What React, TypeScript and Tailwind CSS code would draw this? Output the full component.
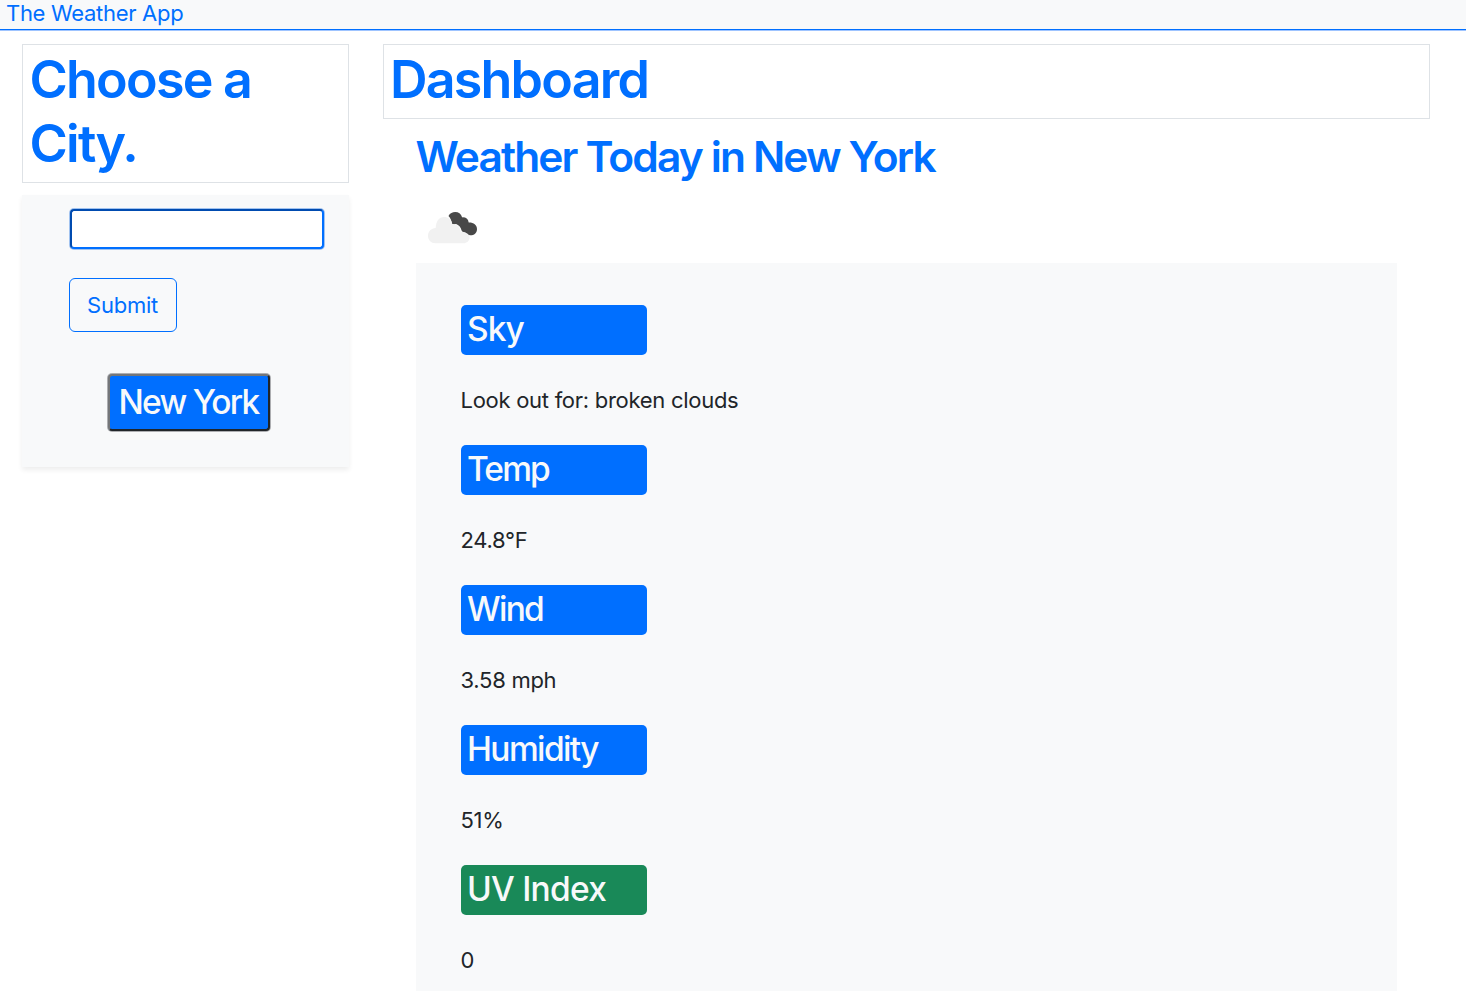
const readings = [
  { label: "Sky", value: "Look out for: broken clouds", tone: "bg-[#006fff]", labelSpacing: "tracking-[-1px]" },
  { label: "Temp", value: "24.8°F", tone: "bg-[#006fff]", labelSpacing: "tracking-[-1.9px]" },
  { label: "Wind", value: "3.58 mph", tone: "bg-[#006fff]", labelSpacing: "tracking-[-1.7px]" },
  { label: "Humidity", value: "51%", tone: "bg-[#006fff]", labelSpacing: "tracking-[-1.6px]" },
  { label: "UV Index", value: "0", tone: "bg-[#198958]", labelSpacing: "tracking-[-0.75px]" },
];

function BrokenClouds() {
  return (
    <svg className="ml-[11px] mt-[11px] block h-[33px] w-[51px]" viewBox="0 0 51 33" aria-hidden="true">
      <path
        d="M21.500 5C23 2 25.600 1 28.200 1c3.300 0 5.800 1.700 7 5.400 3.400-.3 5.900 1.500 6.500 5 4.700-.2 8.300 2.400 8.300 6.500 0 3.900-2.900 6.400-6.600 6.400-2.300 0-4-.8-5.200-2.500-2-.1-3.200-1-3.700-2.500-.8-3.300-2.700-5.300-5.500-6.300l-3.700.7C24.600 9.500 23.300 7 21.500 5Z"
        fill="#484848"
      />
      <path
        d="M8.500 32.300C3.900 32.300 1 29 1 24.800c0-4.500 3.200-7.700 7.700-7.900C9 10.400 12 6 17 6c4.300 0 7.200 2.600 8.300 7 4.700-.3 8 2.500 8.300 7.500 4.500.2 9 2.500 9 6 0 3.300-2.800 5.800-6.300 5.800Z"
        fill="#f1f1f1"
      />
    </svg>
  );
}

export default function App() {
  return (
    <div className="min-h-[996px] bg-white font-['Inter','Liberation_Sans',sans-serif] text-[#212529]">
      <header className="flex h-[30px] items-center border-b border-[#006fff] bg-[#f8f9fa] pb-[3px] pl-[6px] shadow-[0_1px_0_#9fc4ff]">
        <span className="text-[22px] leading-[26px] tracking-[-0.3px] text-[#006fff]">The Weather App</span>
      </header>

      <div className="flex items-start">
        <aside className="w-[382px] pl-[21px] pt-[14px]">
          <h1 className="ml-px h-[139px] w-[327px] border border-[#dee2e6] pl-[6.500px] pt-[3px] text-[52px] font-semibold leading-[64px] tracking-[-1.77px] text-[#006fff]">
            Choose a City.
          </h1>
          <section className="ml-px mt-[12px] h-[272px] w-[327px] bg-[#f8f9fa] pl-[47px] pt-[14px] shadow-[0_3px_5px_rgba(0,0,0,0.07)]">
            <input
              aria-label="City"
              className="ml-px block h-[40px] w-[254px] rounded-[4px] border-2 border-b-[#006fff] border-l-[#004bb0] border-r-[#006fff] border-t-[#004bb0] bg-white px-2 text-[22px] shadow-[0_0_0_1px_rgba(0,95,220,0.35)] outline-none"
            />
            <button className="mt-[29px] block h-[54px] w-[108px] rounded-[6px] border border-[#006fff] pr-px text-[22px] tracking-[-0.25px] text-[#006fff]">
              Submit
            </button>
            <button className="ml-[39px] mt-[42px] block h-[57px] w-[162px] whitespace-nowrap rounded-[4px] border-2 border-b-[#212529] border-l-[#747679] border-r-[#212529] border-t-[#747679] bg-[#006fff] pr-px pb-px text-[33.500px] font-medium leading-[50px] tracking-[-1.75px] text-[#f8f9fa] shadow-[0_0_0_1px_rgba(60,63,67,0.4)]">
              New York
            </button>
          </section>
        </aside>

        <main className="w-[1048px] pt-[14px]">
          <h1 className="ml-px h-[75px] border border-[#dee2e6] pl-[6px] pt-[3px] text-[52px] font-semibold leading-[64px] tracking-[-1.8px] text-[#006fff]">
            Dashboard
          </h1>
          <div className="pl-[34px] pr-[33px]">
            <h2 className="-ml-[0.5px] pt-[11px] text-[42.500px] font-semibold leading-[53px] tracking-[-1.88px] text-[#006fff]">
              Weather Today in New York
            </h2>
            <div className="h-[80px] pt-[17px]">
              <BrokenClouds />
            </div>
            <section className="h-[728px] bg-[#f8f9fa] pl-[45px] pt-[42px]">
              {readings.map((r) => (
                <div key={r.label} className="h-[140px]">
                  <h3 className={`h-[50px] w-[186px] rounded-[5px] pl-[6px] text-[33.500px] font-medium leading-[49px] text-[#f8f9fa] ${r.tone} ${r.labelSpacing}`}>
                    {r.label}
                  </h3>
                  <p className="-ml-[0.5px] pt-[29px] text-[22px] leading-[33px] tracking-[-0.28px]">{r.value}</p>
                </div>
              ))}
            </section>
          </div>
        </main>
      </div>
    </div>
  );
}
